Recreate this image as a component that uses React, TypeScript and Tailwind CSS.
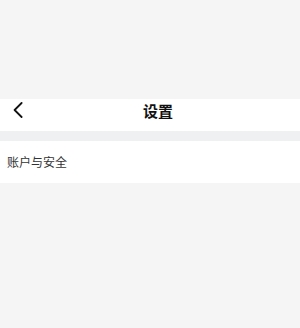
import React from 'react';

export default function App() {
  return (
    <div
      className="flex h-[328px] w-[300px] flex-col bg-[#f5f5f5]"
      style={{ fontFamily: '"Noto Sans CJK SC", "Noto Sans", sans-serif' }}
    >
      <div className="h-[99px]" />
      <div className="h-[32px] bg-white">
        <div className="relative flex h-[23px] items-center justify-center pl-[16px]">
          <button className="absolute left-[12px] top-[3px] flex h-[16px] w-[11px] items-center justify-center">
            <svg width="10" height="16" viewBox="0 0 10 16" fill="none">
              <path d="M8.6 1 L1.6 8 L8.6 15" stroke="#111" strokeWidth="1.8" strokeLinecap="round" strokeLinejoin="round" />
            </svg>
          </button>
          <span className="text-[15px] font-bold leading-none text-[#111]">设置</span>
        </div>
      </div>
      <div className="h-[10px] bg-[#eff0f2]" />
      <div className="flex h-[42px] items-center bg-white px-[7px]">
        <span className="text-[12px] leading-none text-[#333]">账户与安全</span>
      </div>
    </div>
  );
}
